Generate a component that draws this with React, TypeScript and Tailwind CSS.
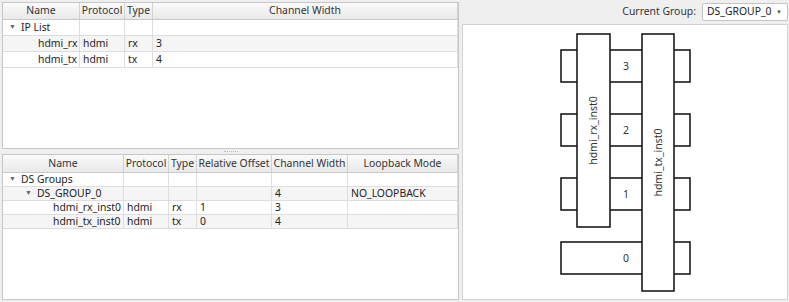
import React from "react";

type Col = { title: string; width: number };
type Row = { cells: (string | React.ReactNode)[]; indent: number; arrow?: boolean };

const topCols: Col[] = [
  { title: "Name", width: 77 },
  { title: "Protocol", width: 45 },
  { title: "Type", width: 28 },
  { title: "Channel Width", width: 305 },
];

const topRows: Row[] = [
  { cells: ["IP List", "", "", ""], indent: 0, arrow: true },
  { cells: ["hdmi_rx", "hdmi", "rx", "3"], indent: 17 },
  { cells: ["hdmi_tx", "hdmi", "tx", "4"], indent: 17 },
];

const bottomCols: Col[] = [
  { title: "Name", width: 121 },
  { title: "Protocol", width: 45 },
  { title: "Type", width: 28 },
  { title: "Relative Offset", width: 75 },
  { title: "Channel Width", width: 76 },
  { title: "Loopback Mode", width: 110 },
];

const bottomRows: Row[] = [
  { cells: ["DS Groups", "", "", "", "", ""], indent: 0, arrow: true },
  { cells: ["DS_GROUP_0", "", "", "", "4", "NO_LOOPBACK"], indent: 16, arrow: true },
  { cells: ["hdmi_rx_inst0", "hdmi", "rx", "1", "3", ""], indent: 32 },
  { cells: ["hdmi_tx_inst0", "hdmi", "tx", "0", "4", ""], indent: 32 },
];

function TreeTable({ cols, rows, headH, rowH }: { cols: Col[]; rows: Row[]; headH: string; rowH: string }) {
  return (
    <div className="flex-1 bg-white border border-[#c6c6c6] overflow-hidden flex flex-col">
      <div className={`flex ${headH} bg-gradient-to-b from-[#fafafa] to-[#e9e9e9] border-b border-[#c9c9c9]`}>
        {cols.map((c) => (
          <div
            key={c.title}
            style={{ width: c.width }}
            className="shrink-0 border-r border-[#d2d2d2] flex items-center justify-center text-[#333] whitespace-nowrap"
          >
            {c.title}
          </div>
        ))}
      </div>
      {rows.map((r, i) => (
        <div key={i} className={`flex ${rowH} ${i % 2 === 1 ? "bg-[#f5f5f5]" : "bg-white"}`}>
          {r.cells.map((cell, j) => (
            <div
              key={j}
              style={{ width: cols[j].width }}
              className="shrink-0 border-r border-b border-[#dedede] flex items-center pl-[3px] text-[#222] whitespace-nowrap overflow-hidden"
            >
              {j === 0 ? (
                <div className="flex items-center" style={{ paddingLeft: r.indent }}>
                  <span className="w-[15px] shrink-0 pl-[3px] text-[7px] text-[#666]">{r.arrow ? "▼" : ""}</span>
                  <span>{cell}</span>
                </div>
              ) : (
                cell
              )}
            </div>
          ))}
        </div>
      ))}
    </div>
  );
}

function Diagram() {
  const lanes = [51, 115, 179, 243];
  return (
    <svg width={324} height={274} viewBox="463 26 324 274" className="block">
      {lanes.map((y) => (
        <rect key={y} x={561} y={y} width={129} height={32} fill="white" stroke="#1c1c1c" strokeWidth={1.6} />
      ))}
      <rect x={577} y={35} width={33} height={193} fill="white" stroke="#1c1c1c" strokeWidth={1.6} />
      <rect x={642} y={35} width={32} height={257} fill="white" stroke="#1c1c1c" strokeWidth={1.6} />
      {["3", "2", "1", "0"].map((t, i) => (
        <text key={t} x={626} y={lanes[i] + 20} textAnchor="middle" fontSize={10.5} fill="#333" fontFamily="Noto Sans, sans-serif">
          {t}
        </text>
      ))}
      <text
        x={597}
        y={131.5}
        textAnchor="middle"
        fontSize={10.5}
        fill="#333"
        fontFamily="Noto Sans, sans-serif"
        transform="rotate(-90 597 131.5)"
      >
        hdmi_rx_inst0
      </text>
      <text
        x={662}
        y={163.5}
        textAnchor="middle"
        fontSize={10.5}
        fill="#333"
        fontFamily="Noto Sans, sans-serif"
        transform="rotate(-90 662 163.5)"
      >
        hdmi_tx_inst0
      </text>
    </svg>
  );
}

export default function App() {
  return (
    <div className="w-[789px] h-[302px] bg-[#efefef] flex p-[2px] gap-[3px] text-[10.4px] font-['Noto_Sans',sans-serif]">
      <div className="w-[458px] flex flex-col">
        <div className="h-[147px] flex">
          <TreeTable cols={topCols} rows={topRows} headH="h-[17px]" rowH="h-[16px]" />
        </div>
        <div className="h-[5px] flex justify-center items-center">
          <div className="w-[14px] h-[1px] border-t border-dotted border-[#bbb]" />
        </div>
        <div className="flex-1 flex">
          <TreeTable cols={bottomCols} rows={bottomRows} headH="h-[18px]" rowH="h-[14px]" />
        </div>
      </div>
      <div className="flex-1 flex flex-col">
        <div className="h-[22px] flex items-center justify-end gap-[6px] pb-[2px]">
          <span className="text-[#333]">Current Group:</span>
          <div className="w-[86px] h-[18px] bg-white border border-[#c4c4c4] rounded-[2px] flex items-center justify-between pl-[4px] pr-[5px] text-[#222]">
            <span>DS_GROUP_0</span>
            <span className="text-[6px] text-[#555]">▼</span>
          </div>
        </div>
        <div className="flex-1 bg-white border border-[#d2d2d2] overflow-hidden">
          <Diagram />
        </div>
      </div>
    </div>
  );
}
